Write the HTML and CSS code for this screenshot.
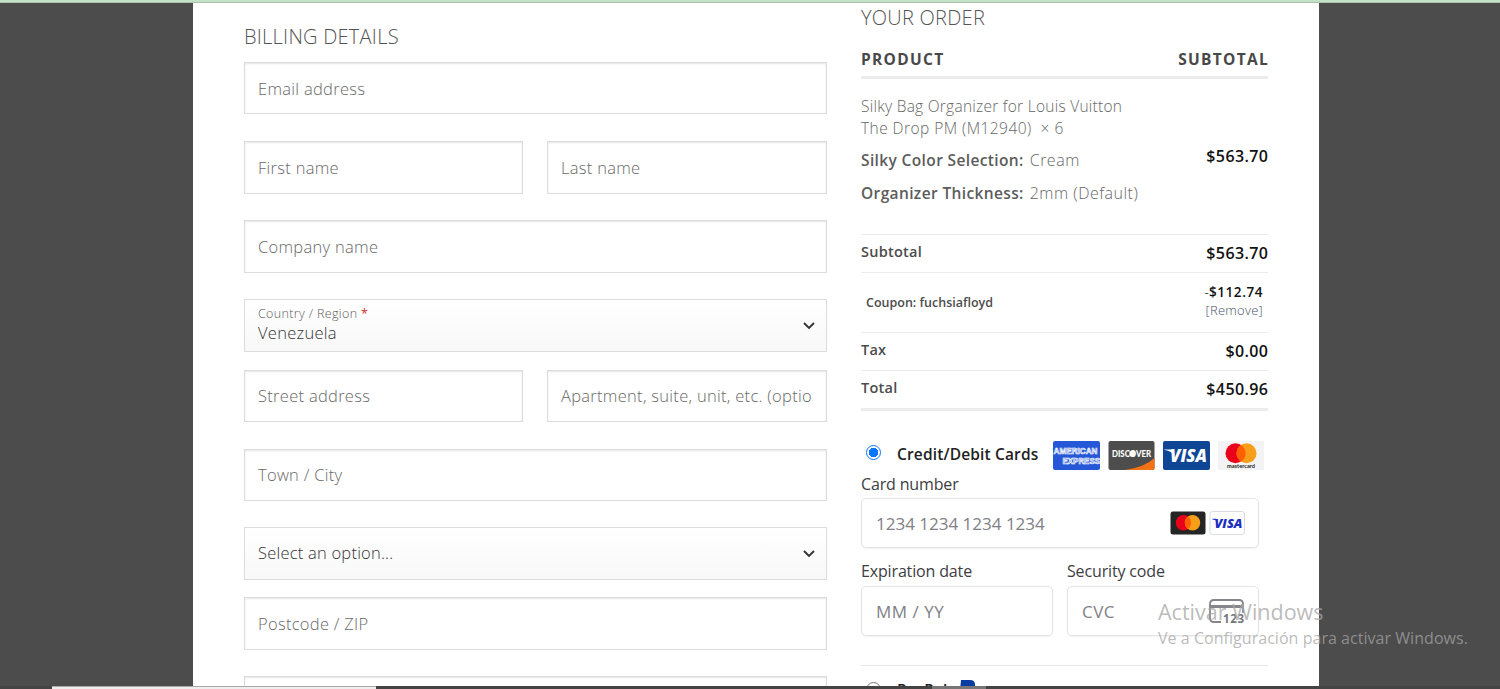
FILE: index.html
```html
<!DOCTYPE html>
<html lang="en">
<head>
<meta charset="utf-8">
<title>Checkout</title>
<link rel="stylesheet" href="styles.css">
</head>
<body>
<div class="topbar"></div>
<main class="page">
  <section class="billing">
    <h3 class="title"><span>BILLING DETAILS</span></h3>
    <div class="field"><span>Email address</span></div>
    <div class="pair mt27">
      <div class="field half h53"><span>First name</span></div>
      <div class="field h53"><span>Last name</span></div>
    </div>
    <div class="field mt26 h53"><span>Company name</span></div>
    <div class="field select country">
      <div class="stack"><span class="small">Country / Region <b class="req">*</b></span><span class="value">Venezuela</span></div>
      <svg class="chev" viewBox="0 0 14 10"><path d="M2 2l5 5 5-5"/></svg>
    </div>
    <div class="pair mt18 raised">
      <div class="field half"><span>Street address</span></div>
      <div class="field"><span>Apartment, suite, unit, etc. (optio</span></div>
    </div>
    <div class="field mt27 raised"><span>Town / City</span></div>
    <div class="field select mt26 h53"><span class="opt">Select an option...</span>
      <svg class="chev" viewBox="0 0 14 10"><path d="M2 2l5 5 5-5"/></svg>
    </div>
    <div class="field mt17 h53"><span>Postcode / ZIP</span></div>
    <div class="field mt26"></div>
  </section>

  <section class="order">
    <h3 class="title order-title"><span>YOUR ORDER</span></h3>
    <div class="row head"><span>PRODUCT</span><span class="head-end">SUBTOTAL</span></div>
    <div class="row item">
      <div class="desc">
        <div><span>Silky Bag Organizer for Louis Vuitton</span></div>
        <div><span class="qty">The Drop PM (M12940)&nbsp; × 6</span></div>
        <div class="opt-line"><b>Silky Color Selection:</b><span>Cream</span></div>
        <div class="opt-line"><b>Organizer Thickness:</b><span>2mm (Default)</span></div>
      </div>
      <b class="price">$563.70</b>
    </div>
    <div class="row sum"><b>Subtotal</b><b class="price">$563.70</b></div>
    <div class="row coupon"><b>Coupon: fuchsiafloyd</b>
      <div class="disc"><span class="amt">-<b>$112.74</b></span><span class="remove">[Remove]</span></div>
    </div>
    <div class="row sum"><b>Tax</b><b class="price">$0.00</b></div>
    <div class="row sum total"><b>Total</b><b class="price">$450.96</b></div>

    <div class="method">
      <span class="radio on"></span><b class="m-name">Credit/Debit Cards</b>
      <div class="cards">
        <svg width="47" height="29" viewBox="0 0 47 29"><rect width="47" height="29" rx="2" fill="#2557d6"/><g fill="#5f86e6" stroke="#fff" stroke-width=".6" font-family="Liberation Sans" font-weight="700" font-size="8.500"><text x=".5" y="12.800" textLength="44" lengthAdjust="spacingAndGlyphs">AMERICAN</text><text x="9.500" y="22.600" textLength="37.500" lengthAdjust="spacingAndGlyphs">EXPRESS</text></g></svg>
        <svg width="47" height="29" viewBox="0 0 47 29"><rect x=".5" width="46" height="29" rx="2" fill="#4d4d4d"/><path d="M17 29Q37 26 46.500 17v10q0 2-2 2z" fill="#f47216"/><text x="4" y="15.800" fill="#fff" font-family="Lato" font-weight="900" font-size="8.500" textLength="39" lengthAdjust="spacingAndGlyphs">DISCOVER</text><circle cx="24.300" cy="12.800" r="3" fill="#fff"/></svg>
        <svg width="47" height="29" viewBox="0 0 47 29"><rect width="47" height="29" rx="2" fill="#0e4595"/><text x="7" y="21" fill="#fff" font-family="Open Sans" font-style="italic" font-weight="800" font-size="17" textLength="37" lengthAdjust="spacingAndGlyphs">VISA</text><path d="M1.500 8.600h7l2 5q-3-4-9-4.600z" fill="#fff"/></svg>
        <svg width="46" height="29" viewBox="0 0 46 29"><rect width="46" height="29" rx="1" fill="#f3f3f3"/><circle cx="17.500" cy="12.300" r="10" fill="#eb001b"/><circle cx="28.500" cy="12.300" r="10" fill="#f79e1b"/><path d="M23 3.900a10 10 0 0 1 0 16.800 10 10 0 0 1 0-16.800z" fill="#ff5f00"/><text x="9" y="27" fill="#222" font-family="Lato" font-weight="700" font-size="6" textLength="28" lengthAdjust="spacingAndGlyphs">mastercard</text></svg>
      </div>
    </div>
    <div class="lab"><span>Card number</span></div>
    <div class="pinput"><span>1234 1234 1234 1234</span>
      <div class="brands">
        <svg width="36" height="24" viewBox="0 0 36 24"><rect x=".5" y=".5" width="35" height="23" rx="2.500" fill="#252525"/><circle cx="13.500" cy="11.800" r="7.700" fill="#eb001b"/><circle cx="22.500" cy="11.800" r="7.700" fill="#f79e1b"/><path d="M18 5.600a7.700 7.700 0 0 1 0 12.400 7.700 7.700 0 0 1 0-12.400z" fill="#ff5f00"/></svg>
        <svg width="36" height="24" viewBox="0 0 36 24"><rect x="1" y=".5" width="34.500" height="23" rx="2.500" fill="#fff" stroke="#d9dbe3"/><text x="5.500" y="17" fill="#1a2fc0" font-family="Open Sans" font-style="italic" font-weight="800" font-size="13" textLength="28" lengthAdjust="spacingAndGlyphs">VISA</text><path d="M3.200 7.700h4l1.600 3q-2-2-5.600-2.500z" fill="#1a2fc0"/></svg>
      </div>
    </div>
    <div class="split">
      <div><div class="lab exp"><span>Expiration date</span></div><div class="pinput"><span class="wide">MM / YY</span></div></div>
      <div><div class="lab exp"><span>Security code</span></div><div class="pinput"><span class="wide">CVC</span>
        <svg class="cvc" width="36" height="26" viewBox="0 0 36 26"><g fill="none" stroke="#85858a" stroke-width="1.800"><path d="M12 23H5q-4 0-4-4V5q0-4 4-4h25q4 0 4 4v9"/><path d="M1 7.500h33" stroke-width="2.800"/></g><text x="14" y="24" fill="#75757a" font-family="Open Sans" font-weight="700" font-size="11.500" textLength="21">123</text></svg>
      </div></div>
    </div>
    <div class="paypal"><span class="radio"></span><b class="m-name">PayPal</b>
      <svg width="20" height="24" viewBox="0 0 20 24"><path d="M2 0h9q6 0 5 7-1 7-8 7H6l-1 7H0z" fill="#0a3ba0"/></svg></div>
  </section>
</main>
<div class="watermark"><div><span class="wm1">Activar Windows</span></div><div class="wm2-line"><span class="wm2">Ve a Configuración para activar Windows.</span></div></div>
<div class="bottombar"><div class="tab"></div><div class="tab2"></div></div>
</body>
</html>
```
FILE: styles.css
```css
*{box-sizing:border-box}
body{margin:0;width:1500px;height:689px;overflow:hidden;position:relative;background:#4c4c4c;font-family:"Open Sans","Noto Sans",sans-serif;font-size:16px;color:#777}
span,b{white-space:nowrap}
b{font-weight:600}
.topbar{height:3px;background:linear-gradient(#c3e2c8 66%,#a9c3ad 66%)}
.page{width:1126px;height:686px;margin-left:193px;background:#fff;display:flex;padding-left:51px;gap:34px;overflow:hidden}
.billing{width:583px;flex:none}
.order{width:407px;flex:none}
.title{margin:0;font-weight:300;font-size:20px;letter-spacing:.25px;color:#555;line-height:26px;padding-top:21px;height:59px}
.field{height:52px;width:100%;border:1px solid #dcdcdc;box-shadow:inset 0 1px 2px rgba(0,0,0,.1);display:flex;align-items:center;padding:0 13px;font-weight:300;font-size:16.500px;letter-spacing:.29px;color:#686868;overflow:hidden}
.raised span{padding-bottom:2px}
.pair{display:flex;gap:24px}
.half{width:279px;flex:none}
.pair .field:last-child{width:280px}
.h53{height:53px}
.mt27{margin-top:27px}.mt26{margin-top:26px}.mt18{margin-top:18px}.mt17{margin-top:17px}
.select{justify-content:space-between;box-shadow:none;background:linear-gradient(#fff,#f8f8f8);color:#333;padding-right:10px}
.opt{padding-bottom:2px;letter-spacing:.22px}
.country{height:53px;margin-top:26px}
.stack{display:flex;flex-direction:column;padding-bottom:4px}
.small{font-size:12.500px;line-height:18px;color:#5c5c5c;letter-spacing:.36px}
.value{line-height:20px}
.req{color:#c33;font-weight:400}
.chev{width:14px;height:10px;fill:none;stroke:#333;stroke-width:1.900}
.order-title{padding-top:2px;height:29px}
.row{display:flex;justify-content:space-between;align-items:center;border-bottom:1px solid #ececec}
.head{height:47px;border-bottom:3px solid #ececec;font-weight:700;color:#484848;font-size:15.500px;letter-spacing:1.300px;padding-top:10px}
.head-end{margin-right:-1px}
.item{height:156px}
.item .price{padding-bottom:2px}
.desc{font-weight:300;font-size:15.500px;letter-spacing:.26px;line-height:21.500px;padding-bottom:13px;color:#666}
.qty{letter-spacing:.45px}
.opt-line{display:flex;gap:6px;padding-top:11px;font-size:16px;letter-spacing:.5px}
.opt-line b{color:#5c5c5c;font-weight:650;font-size:15.500px;letter-spacing:.37px}
.price{color:#111;font-weight:650;font-size:16px;letter-spacing:.4px;margin-right:-.4px}
.sum{height:38px;color:#4c4c4c;font-size:14.500px;letter-spacing:.25px;padding-bottom:3px}
.sum>b:first-child{padding-bottom:1px}
.sum .price{letter-spacing:.4px;padding-top:1px}
.coupon{height:60px;padding:0 5px;font-size:12.500px;color:#4c4c4c}
.disc{display:flex;flex-direction:column;text-align:right;line-height:18px;font-size:13.500px;padding-bottom:4px}
.disc b{color:#111;letter-spacing:.6px;margin-right:-.1px}
.remove{font-weight:300;font-size:13px;color:#465266;letter-spacing:.25px}
.total{height:40px;border-bottom:3px solid #ececec}
.method{display:flex;align-items:center;height:29px;margin-top:30px;padding-left:5px}
.radio{width:15px;height:15px;border:1px solid #777;border-radius:50%;background:#fff;flex:none;margin-bottom:6px}
.radio.on{border:1.500px solid #0a75ff;background:radial-gradient(circle,#0a75ff 4.500px,#fff 5px)}
.m-name{color:#222;font-size:15.500px;letter-spacing:.15px;margin-left:16px}
.method .m-name{width:141px;padding-bottom:3px}
.cards{display:flex;gap:8px;margin-left:15px}
.lab{height:28px;line-height:28px;color:#3d3d42;letter-spacing:-.15px}
.pinput{height:50px;border:1px solid #e3e3e3;border-radius:5px;box-shadow:0 1px 2px rgba(0,0,0,.05);width:398px;padding:0 13px 0 14px;display:flex;align-items:center;justify-content:space-between;color:#808085;font-size:17px}
.wide{letter-spacing:.5px}
.cvc{margin-top:2px}
.brands{display:flex;gap:3px}
.split{display:flex;gap:14px;padding-bottom:29px;border-bottom:1px solid #e6e6e6}
.split .pinput{width:192px}
.exp{height:38px;line-height:46px}
.paypal{display:flex;align-items:flex-start;padding:14px 0 0 5px}
.paypal .radio{margin-top:2px}
.paypal .m-name{line-height:20px;margin-right:11px}
.watermark{position:absolute;left:1158px;top:598px;color:rgba(165,165,165,.75);line-height:27px}
.wm1{font-size:21.500px}.wm2{font-size:16px;letter-spacing:.04px}
.wm2-line{line-height:24px;margin-top:-2px}
.bottombar{position:absolute;left:0;bottom:0;width:100%;height:3px;background:#454445;display:flex;gap:556px;padding-left:52px}
.tab{width:324px;background:#eee;border-top:1px solid #aaa}
.tab2{width:54px;background:#777}
```
